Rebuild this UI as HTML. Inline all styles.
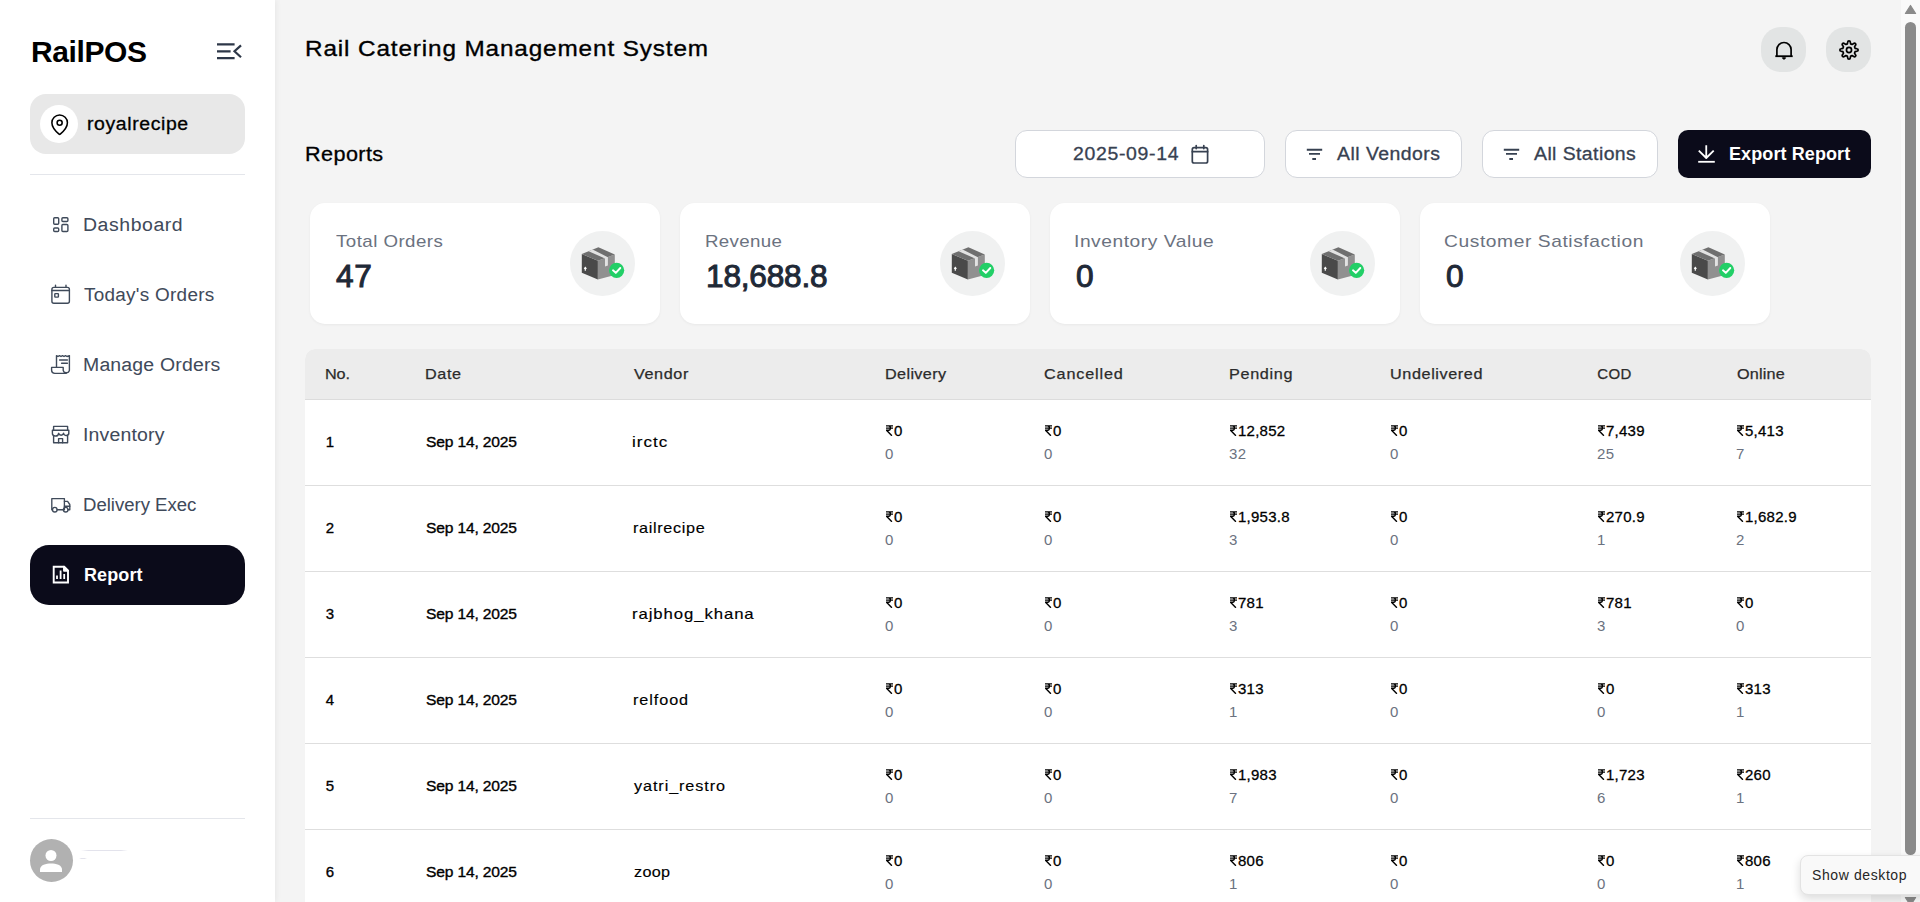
<!DOCTYPE html>
<html><head><meta charset="utf-8"><title>RailPOS Reports</title>
<style>
html,body{margin:0;padding:0;width:1920px;height:902px;overflow:hidden;background:#f4f4f4;font-family:"Liberation Sans", sans-serif;}
.t{position:absolute;white-space:nowrap;}
.box{position:absolute;}
.ic{position:absolute;overflow:visible;}
.rup{display:inline-block;vertical-align:baseline;margin-right:1px;position:relative;top:0px;}
#sb{position:absolute;left:0;top:0;width:275px;height:902px;background:#fff;box-shadow:1px 0 6px rgba(0,0,0,0.06);}
.card{background:#fff;border-radius:15px;box-shadow:0 1px 3px rgba(0,0,0,0.05);}
</style></head><body>
<div id="sb"></div>
<div class="t" style="left:31px;top:36.61px;font-size:30px;line-height:30px;color:#000;font-weight:700;letter-spacing:-0.4px;">RailPOS</div>
<svg class="ic" style="left:214px;top:40px" width="30" height="22" viewBox="0 0 30 22" fill="none" stroke="#2d3748" stroke-width="2.2" stroke-linecap="butt"><path d="M3 4.4H20.6M3 11.3H16.6M3 18.2H20.6"/><path d="M26.2 6.1L20.5 11.3L26.2 16.5" stroke-linecap="square"/></svg>
<div class="box" style="left:30px;top:94px;width:215px;height:60px;border-radius:16px;background:#e8e8e8"></div>
<div class="box" style="left:40px;top:105px;width:38px;height:38px;border-radius:50%;background:#fff"></div>
<svg class="ic" style="left:47.9px;top:112.6px" width="23.3" height="23.3" viewBox="0 0 24 24" fill="none" stroke="#000" stroke-width="1.6"><circle cx="12" cy="10" r="2.6"/><path d="M20 10c0 4.993-5.539 10.193-7.399 11.799a1 1 0 0 1-1.202 0C9.539 20.193 4 14.993 4 10a8 8 0 0 1 16 0" stroke-linejoin="round"/></svg>
<div class="t" style="left:87.4px;top:114.76px;font-size:18px;line-height:18px;color:#000;font-weight:400;letter-spacing:0.56px;-webkit-text-stroke:0.3px #000;transform:scaleX(1.08);transform-origin:0 0;">royalrecipe</div>
<div class="box" style="left:30px;top:174px;width:215px;height:1px;background:#e4e6eb"></div>
<div class="t" style="left:83.2px;top:215.76px;font-size:18px;line-height:18px;color:#3f4a5a;font-weight:400;letter-spacing:0.521px;-webkit-text-stroke:0.05px #3f4a5a;transform:scaleX(1.08);transform-origin:0 0;">Dashboard</div>
<div class="t" style="left:84.3px;top:285.76px;font-size:18px;line-height:18px;color:#3f4a5a;font-weight:400;letter-spacing:0.271px;-webkit-text-stroke:0.05px #3f4a5a;transform:scaleX(1.05);transform-origin:0 0;">Today's Orders</div>
<div class="t" style="left:83.2px;top:355.76px;font-size:18px;line-height:18px;color:#3f4a5a;font-weight:400;letter-spacing:0.17px;-webkit-text-stroke:0.05px #3f4a5a;transform:scaleX(1.08);transform-origin:0 0;">Manage Orders</div>
<div class="t" style="left:83.2px;top:425.76px;font-size:18px;line-height:18px;color:#3f4a5a;font-weight:400;letter-spacing:0.162px;-webkit-text-stroke:0.05px #3f4a5a;transform:scaleX(1.08);transform-origin:0 0;">Inventory</div>
<div class="t" style="left:83.2px;top:495.76px;font-size:18px;line-height:18px;color:#3f4a5a;font-weight:400;letter-spacing:-0.008px;-webkit-text-stroke:0.05px #3f4a5a;transform:scaleX(1.03);transform-origin:0 0;">Delivery Exec</div>
<svg class="ic" style="left:46px;top:210px" width="30" height="30" viewBox="0 0 30 30" fill="none" stroke="#3f4a5a" stroke-width="1.4" stroke-linecap="round" stroke-linejoin="round"><rect x="7.7" y="7.7" width="5" height="6.5" rx="1"/><rect x="15.9" y="7.7" width="6" height="3.8" rx="1"/><rect x="7.7" y="18" width="5" height="3.5" rx="1"/><rect x="15.9" y="14.5" width="6" height="7" rx="1"/></svg>
<svg class="ic" style="left:46px;top:280px" width="30" height="30" viewBox="0 0 30 30" fill="none" stroke="#3f4a5a" stroke-width="1.4" stroke-linecap="round" stroke-linejoin="round"><rect x="5.9" y="7.4" width="17.5" height="15.8" rx="2"/><path d="M5.9 10.5H23.4M9.5 5.3V7.4M20 5.3V7.4"/><rect x="8.8" y="13.6" width="3.6" height="3.5" rx="0.6"/></svg>
<svg class="ic" style="left:46px;top:350px" width="30" height="30" viewBox="0 0 30 30" fill="none" stroke="#3f4a5a" stroke-width="1.4" stroke-linecap="round" stroke-linejoin="round"><path d="M10.5 17.4V5.6L12 6.5L13.5 5.6L15 6.5L16.5 5.6L18 6.5L19.5 5.6L21 6.5L23.4 5.6V20.3A3.2 3.2 0 0 1 17.2 20.3V17.4H5.6V20.3A3.2 3.2 0 0 0 8.8 23.4H20.2"/><path d="M13.6 10H21.4M15.6 13.3H21.4"/></svg>
<svg class="ic" style="left:46px;top:420px" width="30" height="30" viewBox="0 0 30 30" fill="none" stroke="#3f4a5a" stroke-width="1.4" stroke-linecap="round" stroke-linejoin="round"><path d="M7.6 10.3V6.4H21.6V10.3"/><path d="M6.4 10.3H22.8V12.5A2.6 2.6 0 0 1 17.6 13.3A2.6 2.6 0 0 1 12.6 13.3A2.6 2.6 0 0 1 6.4 12.5Z"/><path d="M7.6 15.5V22.8H21.6V15.5"/><path d="M12.6 22.8V18.6H16.6V22.8"/></svg>
<svg class="ic" style="left:46px;top:490px" width="30" height="30" viewBox="0 0 30 30" fill="none" stroke="#3f4a5a" stroke-width="1.35" stroke-linecap="round" stroke-linejoin="round"><path d="M5.8 19.7V8.6H18.4V19.7"/><path d="M11.1 19.7H17.4"/><path d="M18.4 11.3H21.6L23.8 14.5V19.7H22"/><path d="M18.4 16.2H23.8"/><circle cx="8.8" cy="19.7" r="2.3"/><circle cx="19.7" cy="19.7" r="2.3"/></svg>
<div class="box" style="left:30px;top:545px;width:215px;height:60px;border-radius:19px;background:#0b0b1a"></div>
<svg class="ic" style="left:46px;top:560px" width="30" height="30" viewBox="0 0 30 30" fill="none" stroke="#fff" stroke-width="1.9" stroke-linecap="round" stroke-linejoin="round"><path d="M7.7 6.7H18L22 10.7V22.5H7.7Z" stroke-linejoin="miter" stroke-linecap="butt"/><path d="M11 15.4V19M14.6 10.4V19M18.2 13.9V19" stroke-width="1.8" stroke-linecap="butt"/><path d="M18 6.7V10.7H22Z" fill="#fff" stroke-linecap="butt"/></svg>
<div class="t" style="left:84px;top:565.76px;font-size:18px;line-height:18px;color:#fff;font-weight:700;letter-spacing:0.1px;">Report</div>
<div class="box" style="left:30px;top:818px;width:215px;height:1px;background:#e4e6eb"></div>
<svg class="ic" style="left:30px;top:839px" width="43" height="43" viewBox="0 0 43 43"><circle cx="21.5" cy="21.5" r="21.5" fill="#b1b1b1"/><circle cx="21" cy="16.5" r="5.5" fill="#fff"/><path d="M10 33V30.5C10 26 16 24.5 21 24.5S32 26 32 30.5V33Z" fill="#fff"/></svg>
<div class="box" style="left:81px;top:850px;width:47px;height:1px;background:linear-gradient(90deg,rgba(225,225,235,0),#e3e3ec 15%,#e3e3ec 85%,rgba(225,225,235,0))"></div>
<div class="box" style="left:79px;top:858px;width:8px;height:1px;background:linear-gradient(90deg,rgba(225,225,235,0),#e3e3ec 30%,#e3e3ec 70%,rgba(225,225,235,0))"></div>
<div class="t" style="left:305.0px;top:37.95px;font-size:22.5px;line-height:22.5px;color:#000;font-weight:400;letter-spacing:0.809px;-webkit-text-stroke:0.35px #000;transform:scaleX(1.08);transform-origin:0 0;">Rail Catering Management System</div>
<div class="box" style="left:1761px;top:27px;width:45px;height:45px;border-radius:20px;background:#e2e4e4"></div>
<div class="box" style="left:1826px;top:27px;width:45px;height:45px;border-radius:20px;background:#e2e4e4"></div>
<svg class="ic" style="left:1770px;top:37px" width="28" height="28" viewBox="0 0 28 28" fill="none" stroke="#000" stroke-width="1.7" stroke-linecap="round" stroke-linejoin="round"><path d="M6.9 19.2V12.6A7.1 7.1 0 0 1 21.1 12.6V19.2" stroke-linecap="butt"/><path d="M5.3 19.2H22.7" stroke-width="1.8" stroke-linecap="butt"/><path d="M12.5 21.1A1.6 1.6 0 0 0 15.5 21.1Z" fill="#000" stroke-width="1"/></svg>
<svg class="ic" style="left:1835px;top:36px" width="28" height="28" viewBox="0 0 28 28" fill="none" stroke="#000" stroke-width="1.7" stroke-linecap="round" stroke-linejoin="round"><path d="M12.30 7.93L12.75 6.10A1.25 1.25 0 0 1 15.25 6.10L15.70 7.93A6.30 6.30 0 0 1 17.09 8.51L18.70 7.53A1.25 1.25 0 0 1 20.47 9.30L19.49 10.91A6.30 6.30 0 0 1 20.07 12.30L21.90 12.75A1.25 1.25 0 0 1 21.90 15.25L20.07 15.70A6.30 6.30 0 0 1 19.49 17.09L20.47 18.70A1.25 1.25 0 0 1 18.70 20.47L17.09 19.49A6.30 6.30 0 0 1 15.70 20.07L15.25 21.90A1.25 1.25 0 0 1 12.75 21.90L12.30 20.07A6.30 6.30 0 0 1 10.91 19.49L9.30 20.47A1.25 1.25 0 0 1 7.53 18.70L8.51 17.09A6.30 6.30 0 0 1 7.93 15.70L6.10 15.25A1.25 1.25 0 0 1 6.10 12.75L7.93 12.30A6.30 6.30 0 0 1 8.51 10.91L7.53 9.30A1.25 1.25 0 0 1 9.30 7.53L10.91 8.51A6.30 6.30 0 0 1 12.30 7.93Z" stroke-linejoin="round"/><circle cx="14" cy="14" r="2.55"/></svg>
<div class="t" style="left:305.0px;top:144.07px;font-size:20px;line-height:20px;color:#000;font-weight:400;letter-spacing:0.386px;-webkit-text-stroke:0.3px #000;transform:scaleX(1.08);transform-origin:0 0;">Reports</div>
<div class="box" style="left:1015px;top:130px;width:250px;height:48px;border-radius:12px;background:#fff;border:1px solid #d3d6dc;box-sizing:border-box"></div>
<div class="t" style="left:1072.8px;top:144.76px;font-size:18px;line-height:18px;color:#374151;font-weight:400;letter-spacing:0.617px;-webkit-text-stroke:0.3px #374151;transform:scaleX(1.08);transform-origin:0 0;">2025-09-14</div>
<svg class="ic" style="left:1186px;top:142px" width="26" height="26" viewBox="0 0 26 26" fill="none" stroke="#374151" stroke-width="1.7" stroke-linecap="round" stroke-linejoin="round"><rect x="6.3" y="5.6" width="15.3" height="15.4" rx="1.8"/><path d="M6.3 9.7H21.6M10.2 3.6V6.6M17.8 3.6V6.6"/></svg>
<div class="box" style="left:1285px;top:130px;width:177px;height:48px;border-radius:12px;background:#fff;border:1px solid #d3d6dc;box-sizing:border-box"></div>
<div class="t" style="left:1336.7px;top:144.76px;font-size:18px;line-height:18px;color:#374151;font-weight:400;letter-spacing:0.435px;-webkit-text-stroke:0.3px #374151;transform:scaleX(1.08);transform-origin:0 0;">All Vendors</div>
<svg class="ic" style="left:1300px;top:140px" width="28" height="28" viewBox="0 0 28 28" fill="none" stroke="#374151" stroke-width="1.9" stroke-linecap="round" stroke-linejoin="round"><path d="M6.8 9.7H22.2M9 13.9H20M12.3 19H16" stroke-linecap="butt"/></svg>
<div class="box" style="left:1482px;top:130px;width:176px;height:48px;border-radius:12px;background:#fff;border:1px solid #d3d6dc;box-sizing:border-box"></div>
<div class="t" style="left:1533.75px;top:144.76px;font-size:18px;line-height:18px;color:#374151;font-weight:400;letter-spacing:0.383px;-webkit-text-stroke:0.3px #374151;transform:scaleX(1.08);transform-origin:0 0;">All Stations</div>
<svg class="ic" style="left:1497px;top:140px" width="28" height="28" viewBox="0 0 28 28" fill="none" stroke="#374151" stroke-width="1.9" stroke-linecap="round" stroke-linejoin="round"><path d="M6.8 9.7H22.2M9 13.9H20M12.3 19H16" stroke-linecap="butt"/></svg>
<div class="box" style="left:1678px;top:130px;width:193px;height:48px;border-radius:10px;background:#0b0b1a"></div>
<svg class="ic" style="left:1692px;top:140px" width="28" height="28" viewBox="0 0 28 28" fill="none" stroke="#fff" stroke-width="1.8" stroke-linecap="round" stroke-linejoin="round"><path d="M14.25 5.2V18.2M6.8 10.6L14.25 18L21.7 10.6" stroke-linecap="butt"/><path d="M6.2 21.8H22.8" stroke-linecap="butt"/></svg>
<div class="t" style="left:1729px;top:144.76px;font-size:18px;line-height:18px;color:#fff;font-weight:700;letter-spacing:0.1px;">Export Report</div>
<div class="box card" style="left:310px;top:203px;width:350px;height:121px"></div>
<div class="t" style="left:336.0px;top:232.61px;font-size:17px;line-height:17px;color:#6b7280;font-weight:400;letter-spacing:0.413px;transform:scaleX(1.1);transform-origin:0 0;">Total Orders</div>
<div class="t" style="left:335.5px;top:260.76px;font-size:31px;line-height:31px;color:#1f2937;font-weight:400;letter-spacing:0.6px;-webkit-text-stroke:1.0px #1f2937;transform:scaleX(1.02);transform-origin:0 0;">47</div>
<div class="box" style="left:570px;top:231px;width:65px;height:65px;border-radius:50%;background:#f0f1f1"></div>
<svg class="ic" style="left:578px;top:243px" width="40" height="40" viewBox="0 0 40 40"><polygon points="3.8,11.1 19.9,17.7 19.9,36.6 3.8,29.7" fill="#4a4a4a"/><polygon points="19.9,17.7 36.8,11.5 36.8,31.9 19.9,36.6" fill="#909090"/><polygon points="3.8,11.1 20.4,4.2 36.8,11.5 19.9,17.7" fill="#6f6f6f"/><polygon points="10.6,8.2 14.6,6.6 29.9,14.2 29.9,22.6 27,23.6 27,15.5" fill="#e2e2e2"/><path d="M7.3 27.8V24.8M6.2 25.9L7.3 24.4L8.4 25.9" stroke="#fff" stroke-width="1.2" fill="none"/><circle cx="38.6" cy="27.3" r="7.6" fill="#22cf67"/><path d="M35 27.3L37.8 29.9L42.3 25" stroke="#fff" stroke-width="1.9" fill="none" stroke-linecap="round" stroke-linejoin="round"/></svg>
<div class="box card" style="left:680px;top:203px;width:350px;height:121px"></div>
<div class="t" style="left:704.8px;top:232.61px;font-size:17px;line-height:17px;color:#6b7280;font-weight:400;letter-spacing:0.303px;transform:scaleX(1.1);transform-origin:0 0;">Revenue</div>
<div class="t" style="left:705.5px;top:260.76px;font-size:31px;line-height:31px;color:#1f2937;font-weight:400;letter-spacing:-0.2px;-webkit-text-stroke:1.0px #1f2937;transform:scaleX(1.02);transform-origin:0 0;">18,688.8</div>
<div class="box" style="left:940px;top:231px;width:65px;height:65px;border-radius:50%;background:#f0f1f1"></div>
<svg class="ic" style="left:948px;top:243px" width="40" height="40" viewBox="0 0 40 40"><polygon points="3.8,11.1 19.9,17.7 19.9,36.6 3.8,29.7" fill="#4a4a4a"/><polygon points="19.9,17.7 36.8,11.5 36.8,31.9 19.9,36.6" fill="#909090"/><polygon points="3.8,11.1 20.4,4.2 36.8,11.5 19.9,17.7" fill="#6f6f6f"/><polygon points="10.6,8.2 14.6,6.6 29.9,14.2 29.9,22.6 27,23.6 27,15.5" fill="#e2e2e2"/><path d="M7.3 27.8V24.8M6.2 25.9L7.3 24.4L8.4 25.9" stroke="#fff" stroke-width="1.2" fill="none"/><circle cx="38.6" cy="27.3" r="7.6" fill="#22cf67"/><path d="M35 27.3L37.8 29.9L42.3 25" stroke="#fff" stroke-width="1.9" fill="none" stroke-linecap="round" stroke-linejoin="round"/></svg>
<div class="box card" style="left:1050px;top:203px;width:350px;height:121px"></div>
<div class="t" style="left:1073.8px;top:232.61px;font-size:17px;line-height:17px;color:#6b7280;font-weight:400;letter-spacing:0.48px;transform:scaleX(1.13);transform-origin:0 0;">Inventory Value</div>
<div class="t" style="left:1075.5px;top:260.76px;font-size:31px;line-height:31px;color:#1f2937;font-weight:400;letter-spacing:-0.2px;-webkit-text-stroke:1.0px #1f2937;transform:scaleX(1.02);transform-origin:0 0;">0</div>
<div class="box" style="left:1310px;top:231px;width:65px;height:65px;border-radius:50%;background:#f0f1f1"></div>
<svg class="ic" style="left:1318px;top:243px" width="40" height="40" viewBox="0 0 40 40"><polygon points="3.8,11.1 19.9,17.7 19.9,36.6 3.8,29.7" fill="#4a4a4a"/><polygon points="19.9,17.7 36.8,11.5 36.8,31.9 19.9,36.6" fill="#909090"/><polygon points="3.8,11.1 20.4,4.2 36.8,11.5 19.9,17.7" fill="#6f6f6f"/><polygon points="10.6,8.2 14.6,6.6 29.9,14.2 29.9,22.6 27,23.6 27,15.5" fill="#e2e2e2"/><path d="M7.3 27.8V24.8M6.2 25.9L7.3 24.4L8.4 25.9" stroke="#fff" stroke-width="1.2" fill="none"/><circle cx="38.6" cy="27.3" r="7.6" fill="#22cf67"/><path d="M35 27.3L37.8 29.9L42.3 25" stroke="#fff" stroke-width="1.9" fill="none" stroke-linecap="round" stroke-linejoin="round"/></svg>
<div class="box card" style="left:1420px;top:203px;width:350px;height:121px"></div>
<div class="t" style="left:1444.0px;top:232.61px;font-size:17px;line-height:17px;color:#6b7280;font-weight:400;letter-spacing:0.509px;transform:scaleX(1.13);transform-origin:0 0;">Customer Satisfaction</div>
<div class="t" style="left:1445.5px;top:260.76px;font-size:31px;line-height:31px;color:#1f2937;font-weight:400;letter-spacing:-0.2px;-webkit-text-stroke:1.0px #1f2937;transform:scaleX(1.02);transform-origin:0 0;">0</div>
<div class="box" style="left:1680px;top:231px;width:65px;height:65px;border-radius:50%;background:#f0f1f1"></div>
<svg class="ic" style="left:1688px;top:243px" width="40" height="40" viewBox="0 0 40 40"><polygon points="3.8,11.1 19.9,17.7 19.9,36.6 3.8,29.7" fill="#4a4a4a"/><polygon points="19.9,17.7 36.8,11.5 36.8,31.9 19.9,36.6" fill="#909090"/><polygon points="3.8,11.1 20.4,4.2 36.8,11.5 19.9,17.7" fill="#6f6f6f"/><polygon points="10.6,8.2 14.6,6.6 29.9,14.2 29.9,22.6 27,23.6 27,15.5" fill="#e2e2e2"/><path d="M7.3 27.8V24.8M6.2 25.9L7.3 24.4L8.4 25.9" stroke="#fff" stroke-width="1.2" fill="none"/><circle cx="38.6" cy="27.3" r="7.6" fill="#22cf67"/><path d="M35 27.3L37.8 29.9L42.3 25" stroke="#fff" stroke-width="1.9" fill="none" stroke-linecap="round" stroke-linejoin="round"/></svg>
<div class="box" style="left:305px;top:349px;width:1566px;height:600px;border-radius:10px 10px 0 0;background:#fff;overflow:hidden"><div style="position:absolute;left:0;top:0;right:0;height:50px;background:#ececec;border-bottom:1px solid #dcdcdc"></div></div>
<div class="t" style="left:324.5px;top:366.30px;font-size:15px;line-height:15px;color:#2b2b2b;font-weight:400;letter-spacing:-0.093px;-webkit-text-stroke:0.25px #2b2b2b;transform:scaleX(1.08);transform-origin:0 0;">No.</div>
<div class="t" style="left:425.2px;top:366.30px;font-size:15px;line-height:15px;color:#2b2b2b;font-weight:400;letter-spacing:0.556px;-webkit-text-stroke:0.25px #2b2b2b;transform:scaleX(1.08);transform-origin:0 0;">Date</div>
<div class="t" style="left:633.75px;top:366.30px;font-size:15px;line-height:15px;color:#2b2b2b;font-weight:400;letter-spacing:0.556px;-webkit-text-stroke:0.25px #2b2b2b;transform:scaleX(1.08);transform-origin:0 0;">Vendor</div>
<div class="t" style="left:884.75px;top:366.30px;font-size:15px;line-height:15px;color:#2b2b2b;font-weight:400;letter-spacing:0.331px;-webkit-text-stroke:0.25px #2b2b2b;transform:scaleX(1.08);transform-origin:0 0;">Delivery</div>
<div class="t" style="left:1044.25px;top:366.30px;font-size:15px;line-height:15px;color:#2b2b2b;font-weight:400;letter-spacing:0.781px;-webkit-text-stroke:0.25px #2b2b2b;transform:scaleX(1.08);transform-origin:0 0;">Cancelled</div>
<div class="t" style="left:1228.6px;top:366.30px;font-size:15px;line-height:15px;color:#2b2b2b;font-weight:400;letter-spacing:0.617px;-webkit-text-stroke:0.25px #2b2b2b;transform:scaleX(1.08);transform-origin:0 0;">Pending</div>
<div class="t" style="left:1389.8px;top:366.30px;font-size:15px;line-height:15px;color:#2b2b2b;font-weight:400;letter-spacing:0.556px;-webkit-text-stroke:0.25px #2b2b2b;transform:scaleX(1.08);transform-origin:0 0;">Undelivered</div>
<div class="t" style="left:1597.2px;top:366.30px;font-size:15px;line-height:15px;color:#2b2b2b;font-weight:400;letter-spacing:0.4px;-webkit-text-stroke:0.25px #2b2b2b;">COD</div>
<div class="t" style="left:1736.7px;top:366.30px;font-size:15px;line-height:15px;color:#2b2b2b;font-weight:400;letter-spacing:0.185px;-webkit-text-stroke:0.25px #2b2b2b;transform:scaleX(1.08);transform-origin:0 0;">Online</div>
<div class="t" style="left:325.8px;top:434.30px;font-size:15px;line-height:15px;color:#000;font-weight:400;letter-spacing:0px;-webkit-text-stroke:0.32px #000;">1</div>
<div class="t" style="left:426.1px;top:434.30px;font-size:15px;line-height:15px;color:#000;font-weight:400;letter-spacing:-0.157px;-webkit-text-stroke:0.35px #000;transform:scaleX(1.04);transform-origin:0 0;">Sep 14, 2025</div>
<div class="t" style="left:632.0px;top:434.30px;font-size:15px;line-height:15px;color:#000;font-weight:400;letter-spacing:0.877px;-webkit-text-stroke:0.15px #000;transform:scaleX(1.14);transform-origin:0 0;">irctc</div>
<div class="t" style="left:886px;top:423.30px;font-size:15px;line-height:15px;color:#000;font-weight:400;letter-spacing:0.25px;-webkit-text-stroke:0.28px #000;"><svg class="rup" viewBox="0 0 7 11" width="7" height="11"><path d="M0 0.8H7M0 3.1H7M0.4 0.8H2.6C5 0.8 5 5.2 2.6 5.2H0.5L5.9 10.8" fill="none" stroke="currentColor" stroke-width="1.35"/></svg>0</div>
<div class="t" style="left:885px;top:446.30px;font-size:15px;line-height:15px;color:#6b7280;font-weight:400;letter-spacing:0.3px;">0</div>
<div class="t" style="left:1045px;top:423.30px;font-size:15px;line-height:15px;color:#000;font-weight:400;letter-spacing:0.25px;-webkit-text-stroke:0.28px #000;"><svg class="rup" viewBox="0 0 7 11" width="7" height="11"><path d="M0 0.8H7M0 3.1H7M0.4 0.8H2.6C5 0.8 5 5.2 2.6 5.2H0.5L5.9 10.8" fill="none" stroke="currentColor" stroke-width="1.35"/></svg>0</div>
<div class="t" style="left:1044px;top:446.30px;font-size:15px;line-height:15px;color:#6b7280;font-weight:400;letter-spacing:0.3px;">0</div>
<div class="t" style="left:1230px;top:423.30px;font-size:15px;line-height:15px;color:#000;font-weight:400;letter-spacing:0.25px;-webkit-text-stroke:0.28px #000;"><svg class="rup" viewBox="0 0 7 11" width="7" height="11"><path d="M0 0.8H7M0 3.1H7M0.4 0.8H2.6C5 0.8 5 5.2 2.6 5.2H0.5L5.9 10.8" fill="none" stroke="currentColor" stroke-width="1.35"/></svg>12,852</div>
<div class="t" style="left:1229px;top:446.30px;font-size:15px;line-height:15px;color:#6b7280;font-weight:400;letter-spacing:0.3px;">32</div>
<div class="t" style="left:1391px;top:423.30px;font-size:15px;line-height:15px;color:#000;font-weight:400;letter-spacing:0.25px;-webkit-text-stroke:0.28px #000;"><svg class="rup" viewBox="0 0 7 11" width="7" height="11"><path d="M0 0.8H7M0 3.1H7M0.4 0.8H2.6C5 0.8 5 5.2 2.6 5.2H0.5L5.9 10.8" fill="none" stroke="currentColor" stroke-width="1.35"/></svg>0</div>
<div class="t" style="left:1390px;top:446.30px;font-size:15px;line-height:15px;color:#6b7280;font-weight:400;letter-spacing:0.3px;">0</div>
<div class="t" style="left:1598px;top:423.30px;font-size:15px;line-height:15px;color:#000;font-weight:400;letter-spacing:0.25px;-webkit-text-stroke:0.28px #000;"><svg class="rup" viewBox="0 0 7 11" width="7" height="11"><path d="M0 0.8H7M0 3.1H7M0.4 0.8H2.6C5 0.8 5 5.2 2.6 5.2H0.5L5.9 10.8" fill="none" stroke="currentColor" stroke-width="1.35"/></svg>7,439</div>
<div class="t" style="left:1597px;top:446.30px;font-size:15px;line-height:15px;color:#6b7280;font-weight:400;letter-spacing:0.3px;">25</div>
<div class="t" style="left:1737px;top:423.30px;font-size:15px;line-height:15px;color:#000;font-weight:400;letter-spacing:0.25px;-webkit-text-stroke:0.28px #000;"><svg class="rup" viewBox="0 0 7 11" width="7" height="11"><path d="M0 0.8H7M0 3.1H7M0.4 0.8H2.6C5 0.8 5 5.2 2.6 5.2H0.5L5.9 10.8" fill="none" stroke="currentColor" stroke-width="1.35"/></svg>5,413</div>
<div class="t" style="left:1736px;top:446.30px;font-size:15px;line-height:15px;color:#6b7280;font-weight:400;letter-spacing:0.3px;">7</div>
<div class="box" style="left:305px;top:485px;width:1566px;height:1px;background:#dedede"></div>
<div class="t" style="left:325.8px;top:520.30px;font-size:15px;line-height:15px;color:#000;font-weight:400;letter-spacing:0px;-webkit-text-stroke:0.32px #000;">2</div>
<div class="t" style="left:426.1px;top:520.30px;font-size:15px;line-height:15px;color:#000;font-weight:400;letter-spacing:-0.157px;-webkit-text-stroke:0.35px #000;transform:scaleX(1.04);transform-origin:0 0;">Sep 14, 2025</div>
<div class="t" style="left:633.0px;top:520.30px;font-size:15px;line-height:15px;color:#000;font-weight:400;letter-spacing:0.617px;-webkit-text-stroke:0.15px #000;transform:scaleX(1.08);transform-origin:0 0;">railrecipe</div>
<div class="t" style="left:886px;top:509.30px;font-size:15px;line-height:15px;color:#000;font-weight:400;letter-spacing:0.25px;-webkit-text-stroke:0.28px #000;"><svg class="rup" viewBox="0 0 7 11" width="7" height="11"><path d="M0 0.8H7M0 3.1H7M0.4 0.8H2.6C5 0.8 5 5.2 2.6 5.2H0.5L5.9 10.8" fill="none" stroke="currentColor" stroke-width="1.35"/></svg>0</div>
<div class="t" style="left:885px;top:532.30px;font-size:15px;line-height:15px;color:#6b7280;font-weight:400;letter-spacing:0.3px;">0</div>
<div class="t" style="left:1045px;top:509.30px;font-size:15px;line-height:15px;color:#000;font-weight:400;letter-spacing:0.25px;-webkit-text-stroke:0.28px #000;"><svg class="rup" viewBox="0 0 7 11" width="7" height="11"><path d="M0 0.8H7M0 3.1H7M0.4 0.8H2.6C5 0.8 5 5.2 2.6 5.2H0.5L5.9 10.8" fill="none" stroke="currentColor" stroke-width="1.35"/></svg>0</div>
<div class="t" style="left:1044px;top:532.30px;font-size:15px;line-height:15px;color:#6b7280;font-weight:400;letter-spacing:0.3px;">0</div>
<div class="t" style="left:1230px;top:509.30px;font-size:15px;line-height:15px;color:#000;font-weight:400;letter-spacing:0.25px;-webkit-text-stroke:0.28px #000;"><svg class="rup" viewBox="0 0 7 11" width="7" height="11"><path d="M0 0.8H7M0 3.1H7M0.4 0.8H2.6C5 0.8 5 5.2 2.6 5.2H0.5L5.9 10.8" fill="none" stroke="currentColor" stroke-width="1.35"/></svg>1,953.8</div>
<div class="t" style="left:1229px;top:532.30px;font-size:15px;line-height:15px;color:#6b7280;font-weight:400;letter-spacing:0.3px;">3</div>
<div class="t" style="left:1391px;top:509.30px;font-size:15px;line-height:15px;color:#000;font-weight:400;letter-spacing:0.25px;-webkit-text-stroke:0.28px #000;"><svg class="rup" viewBox="0 0 7 11" width="7" height="11"><path d="M0 0.8H7M0 3.1H7M0.4 0.8H2.6C5 0.8 5 5.2 2.6 5.2H0.5L5.9 10.8" fill="none" stroke="currentColor" stroke-width="1.35"/></svg>0</div>
<div class="t" style="left:1390px;top:532.30px;font-size:15px;line-height:15px;color:#6b7280;font-weight:400;letter-spacing:0.3px;">0</div>
<div class="t" style="left:1598px;top:509.30px;font-size:15px;line-height:15px;color:#000;font-weight:400;letter-spacing:0.25px;-webkit-text-stroke:0.28px #000;"><svg class="rup" viewBox="0 0 7 11" width="7" height="11"><path d="M0 0.8H7M0 3.1H7M0.4 0.8H2.6C5 0.8 5 5.2 2.6 5.2H0.5L5.9 10.8" fill="none" stroke="currentColor" stroke-width="1.35"/></svg>270.9</div>
<div class="t" style="left:1597px;top:532.30px;font-size:15px;line-height:15px;color:#6b7280;font-weight:400;letter-spacing:0.3px;">1</div>
<div class="t" style="left:1737px;top:509.30px;font-size:15px;line-height:15px;color:#000;font-weight:400;letter-spacing:0.25px;-webkit-text-stroke:0.28px #000;"><svg class="rup" viewBox="0 0 7 11" width="7" height="11"><path d="M0 0.8H7M0 3.1H7M0.4 0.8H2.6C5 0.8 5 5.2 2.6 5.2H0.5L5.9 10.8" fill="none" stroke="currentColor" stroke-width="1.35"/></svg>1,682.9</div>
<div class="t" style="left:1736px;top:532.30px;font-size:15px;line-height:15px;color:#6b7280;font-weight:400;letter-spacing:0.3px;">2</div>
<div class="box" style="left:305px;top:571px;width:1566px;height:1px;background:#dedede"></div>
<div class="t" style="left:325.8px;top:606.30px;font-size:15px;line-height:15px;color:#000;font-weight:400;letter-spacing:0px;-webkit-text-stroke:0.32px #000;">3</div>
<div class="t" style="left:426.1px;top:606.30px;font-size:15px;line-height:15px;color:#000;font-weight:400;letter-spacing:-0.157px;-webkit-text-stroke:0.35px #000;transform:scaleX(1.04);transform-origin:0 0;">Sep 14, 2025</div>
<div class="t" style="left:632.0px;top:606.30px;font-size:15px;line-height:15px;color:#000;font-weight:400;letter-spacing:0.822px;-webkit-text-stroke:0.15px #000;transform:scaleX(1.115);transform-origin:0 0;">rajbhog_khana</div>
<div class="t" style="left:886px;top:595.30px;font-size:15px;line-height:15px;color:#000;font-weight:400;letter-spacing:0.25px;-webkit-text-stroke:0.28px #000;"><svg class="rup" viewBox="0 0 7 11" width="7" height="11"><path d="M0 0.8H7M0 3.1H7M0.4 0.8H2.6C5 0.8 5 5.2 2.6 5.2H0.5L5.9 10.8" fill="none" stroke="currentColor" stroke-width="1.35"/></svg>0</div>
<div class="t" style="left:885px;top:618.30px;font-size:15px;line-height:15px;color:#6b7280;font-weight:400;letter-spacing:0.3px;">0</div>
<div class="t" style="left:1045px;top:595.30px;font-size:15px;line-height:15px;color:#000;font-weight:400;letter-spacing:0.25px;-webkit-text-stroke:0.28px #000;"><svg class="rup" viewBox="0 0 7 11" width="7" height="11"><path d="M0 0.8H7M0 3.1H7M0.4 0.8H2.6C5 0.8 5 5.2 2.6 5.2H0.5L5.9 10.8" fill="none" stroke="currentColor" stroke-width="1.35"/></svg>0</div>
<div class="t" style="left:1044px;top:618.30px;font-size:15px;line-height:15px;color:#6b7280;font-weight:400;letter-spacing:0.3px;">0</div>
<div class="t" style="left:1230px;top:595.30px;font-size:15px;line-height:15px;color:#000;font-weight:400;letter-spacing:0.25px;-webkit-text-stroke:0.28px #000;"><svg class="rup" viewBox="0 0 7 11" width="7" height="11"><path d="M0 0.8H7M0 3.1H7M0.4 0.8H2.6C5 0.8 5 5.2 2.6 5.2H0.5L5.9 10.8" fill="none" stroke="currentColor" stroke-width="1.35"/></svg>781</div>
<div class="t" style="left:1229px;top:618.30px;font-size:15px;line-height:15px;color:#6b7280;font-weight:400;letter-spacing:0.3px;">3</div>
<div class="t" style="left:1391px;top:595.30px;font-size:15px;line-height:15px;color:#000;font-weight:400;letter-spacing:0.25px;-webkit-text-stroke:0.28px #000;"><svg class="rup" viewBox="0 0 7 11" width="7" height="11"><path d="M0 0.8H7M0 3.1H7M0.4 0.8H2.6C5 0.8 5 5.2 2.6 5.2H0.5L5.9 10.8" fill="none" stroke="currentColor" stroke-width="1.35"/></svg>0</div>
<div class="t" style="left:1390px;top:618.30px;font-size:15px;line-height:15px;color:#6b7280;font-weight:400;letter-spacing:0.3px;">0</div>
<div class="t" style="left:1598px;top:595.30px;font-size:15px;line-height:15px;color:#000;font-weight:400;letter-spacing:0.25px;-webkit-text-stroke:0.28px #000;"><svg class="rup" viewBox="0 0 7 11" width="7" height="11"><path d="M0 0.8H7M0 3.1H7M0.4 0.8H2.6C5 0.8 5 5.2 2.6 5.2H0.5L5.9 10.8" fill="none" stroke="currentColor" stroke-width="1.35"/></svg>781</div>
<div class="t" style="left:1597px;top:618.30px;font-size:15px;line-height:15px;color:#6b7280;font-weight:400;letter-spacing:0.3px;">3</div>
<div class="t" style="left:1737px;top:595.30px;font-size:15px;line-height:15px;color:#000;font-weight:400;letter-spacing:0.25px;-webkit-text-stroke:0.28px #000;"><svg class="rup" viewBox="0 0 7 11" width="7" height="11"><path d="M0 0.8H7M0 3.1H7M0.4 0.8H2.6C5 0.8 5 5.2 2.6 5.2H0.5L5.9 10.8" fill="none" stroke="currentColor" stroke-width="1.35"/></svg>0</div>
<div class="t" style="left:1736px;top:618.30px;font-size:15px;line-height:15px;color:#6b7280;font-weight:400;letter-spacing:0.3px;">0</div>
<div class="box" style="left:305px;top:657px;width:1566px;height:1px;background:#dedede"></div>
<div class="t" style="left:325.8px;top:692.30px;font-size:15px;line-height:15px;color:#000;font-weight:400;letter-spacing:0px;-webkit-text-stroke:0.32px #000;">4</div>
<div class="t" style="left:426.1px;top:692.30px;font-size:15px;line-height:15px;color:#000;font-weight:400;letter-spacing:-0.157px;-webkit-text-stroke:0.35px #000;transform:scaleX(1.04);transform-origin:0 0;">Sep 14, 2025</div>
<div class="t" style="left:633.0px;top:692.30px;font-size:15px;line-height:15px;color:#000;font-weight:400;letter-spacing:0.864px;-webkit-text-stroke:0.15px #000;transform:scaleX(1.08);transform-origin:0 0;">relfood</div>
<div class="t" style="left:886px;top:681.30px;font-size:15px;line-height:15px;color:#000;font-weight:400;letter-spacing:0.25px;-webkit-text-stroke:0.28px #000;"><svg class="rup" viewBox="0 0 7 11" width="7" height="11"><path d="M0 0.8H7M0 3.1H7M0.4 0.8H2.6C5 0.8 5 5.2 2.6 5.2H0.5L5.9 10.8" fill="none" stroke="currentColor" stroke-width="1.35"/></svg>0</div>
<div class="t" style="left:885px;top:704.30px;font-size:15px;line-height:15px;color:#6b7280;font-weight:400;letter-spacing:0.3px;">0</div>
<div class="t" style="left:1045px;top:681.30px;font-size:15px;line-height:15px;color:#000;font-weight:400;letter-spacing:0.25px;-webkit-text-stroke:0.28px #000;"><svg class="rup" viewBox="0 0 7 11" width="7" height="11"><path d="M0 0.8H7M0 3.1H7M0.4 0.8H2.6C5 0.8 5 5.2 2.6 5.2H0.5L5.9 10.8" fill="none" stroke="currentColor" stroke-width="1.35"/></svg>0</div>
<div class="t" style="left:1044px;top:704.30px;font-size:15px;line-height:15px;color:#6b7280;font-weight:400;letter-spacing:0.3px;">0</div>
<div class="t" style="left:1230px;top:681.30px;font-size:15px;line-height:15px;color:#000;font-weight:400;letter-spacing:0.25px;-webkit-text-stroke:0.28px #000;"><svg class="rup" viewBox="0 0 7 11" width="7" height="11"><path d="M0 0.8H7M0 3.1H7M0.4 0.8H2.6C5 0.8 5 5.2 2.6 5.2H0.5L5.9 10.8" fill="none" stroke="currentColor" stroke-width="1.35"/></svg>313</div>
<div class="t" style="left:1229px;top:704.30px;font-size:15px;line-height:15px;color:#6b7280;font-weight:400;letter-spacing:0.3px;">1</div>
<div class="t" style="left:1391px;top:681.30px;font-size:15px;line-height:15px;color:#000;font-weight:400;letter-spacing:0.25px;-webkit-text-stroke:0.28px #000;"><svg class="rup" viewBox="0 0 7 11" width="7" height="11"><path d="M0 0.8H7M0 3.1H7M0.4 0.8H2.6C5 0.8 5 5.2 2.6 5.2H0.5L5.9 10.8" fill="none" stroke="currentColor" stroke-width="1.35"/></svg>0</div>
<div class="t" style="left:1390px;top:704.30px;font-size:15px;line-height:15px;color:#6b7280;font-weight:400;letter-spacing:0.3px;">0</div>
<div class="t" style="left:1598px;top:681.30px;font-size:15px;line-height:15px;color:#000;font-weight:400;letter-spacing:0.25px;-webkit-text-stroke:0.28px #000;"><svg class="rup" viewBox="0 0 7 11" width="7" height="11"><path d="M0 0.8H7M0 3.1H7M0.4 0.8H2.6C5 0.8 5 5.2 2.6 5.2H0.5L5.9 10.8" fill="none" stroke="currentColor" stroke-width="1.35"/></svg>0</div>
<div class="t" style="left:1597px;top:704.30px;font-size:15px;line-height:15px;color:#6b7280;font-weight:400;letter-spacing:0.3px;">0</div>
<div class="t" style="left:1737px;top:681.30px;font-size:15px;line-height:15px;color:#000;font-weight:400;letter-spacing:0.25px;-webkit-text-stroke:0.28px #000;"><svg class="rup" viewBox="0 0 7 11" width="7" height="11"><path d="M0 0.8H7M0 3.1H7M0.4 0.8H2.6C5 0.8 5 5.2 2.6 5.2H0.5L5.9 10.8" fill="none" stroke="currentColor" stroke-width="1.35"/></svg>313</div>
<div class="t" style="left:1736px;top:704.30px;font-size:15px;line-height:15px;color:#6b7280;font-weight:400;letter-spacing:0.3px;">1</div>
<div class="box" style="left:305px;top:743px;width:1566px;height:1px;background:#dedede"></div>
<div class="t" style="left:325.8px;top:778.30px;font-size:15px;line-height:15px;color:#000;font-weight:400;letter-spacing:0px;-webkit-text-stroke:0.32px #000;">5</div>
<div class="t" style="left:426.1px;top:778.30px;font-size:15px;line-height:15px;color:#000;font-weight:400;letter-spacing:-0.157px;-webkit-text-stroke:0.35px #000;transform:scaleX(1.04);transform-origin:0 0;">Sep 14, 2025</div>
<div class="t" style="left:633.75px;top:778.30px;font-size:15px;line-height:15px;color:#000;font-weight:400;letter-spacing:0.838px;-webkit-text-stroke:0.15px #000;transform:scaleX(1.08);transform-origin:0 0;">yatri_restro</div>
<div class="t" style="left:886px;top:767.30px;font-size:15px;line-height:15px;color:#000;font-weight:400;letter-spacing:0.25px;-webkit-text-stroke:0.28px #000;"><svg class="rup" viewBox="0 0 7 11" width="7" height="11"><path d="M0 0.8H7M0 3.1H7M0.4 0.8H2.6C5 0.8 5 5.2 2.6 5.2H0.5L5.9 10.8" fill="none" stroke="currentColor" stroke-width="1.35"/></svg>0</div>
<div class="t" style="left:885px;top:790.30px;font-size:15px;line-height:15px;color:#6b7280;font-weight:400;letter-spacing:0.3px;">0</div>
<div class="t" style="left:1045px;top:767.30px;font-size:15px;line-height:15px;color:#000;font-weight:400;letter-spacing:0.25px;-webkit-text-stroke:0.28px #000;"><svg class="rup" viewBox="0 0 7 11" width="7" height="11"><path d="M0 0.8H7M0 3.1H7M0.4 0.8H2.6C5 0.8 5 5.2 2.6 5.2H0.5L5.9 10.8" fill="none" stroke="currentColor" stroke-width="1.35"/></svg>0</div>
<div class="t" style="left:1044px;top:790.30px;font-size:15px;line-height:15px;color:#6b7280;font-weight:400;letter-spacing:0.3px;">0</div>
<div class="t" style="left:1230px;top:767.30px;font-size:15px;line-height:15px;color:#000;font-weight:400;letter-spacing:0.25px;-webkit-text-stroke:0.28px #000;"><svg class="rup" viewBox="0 0 7 11" width="7" height="11"><path d="M0 0.8H7M0 3.1H7M0.4 0.8H2.6C5 0.8 5 5.2 2.6 5.2H0.5L5.9 10.8" fill="none" stroke="currentColor" stroke-width="1.35"/></svg>1,983</div>
<div class="t" style="left:1229px;top:790.30px;font-size:15px;line-height:15px;color:#6b7280;font-weight:400;letter-spacing:0.3px;">7</div>
<div class="t" style="left:1391px;top:767.30px;font-size:15px;line-height:15px;color:#000;font-weight:400;letter-spacing:0.25px;-webkit-text-stroke:0.28px #000;"><svg class="rup" viewBox="0 0 7 11" width="7" height="11"><path d="M0 0.8H7M0 3.1H7M0.4 0.8H2.6C5 0.8 5 5.2 2.6 5.2H0.5L5.9 10.8" fill="none" stroke="currentColor" stroke-width="1.35"/></svg>0</div>
<div class="t" style="left:1390px;top:790.30px;font-size:15px;line-height:15px;color:#6b7280;font-weight:400;letter-spacing:0.3px;">0</div>
<div class="t" style="left:1598px;top:767.30px;font-size:15px;line-height:15px;color:#000;font-weight:400;letter-spacing:0.25px;-webkit-text-stroke:0.28px #000;"><svg class="rup" viewBox="0 0 7 11" width="7" height="11"><path d="M0 0.8H7M0 3.1H7M0.4 0.8H2.6C5 0.8 5 5.2 2.6 5.2H0.5L5.9 10.8" fill="none" stroke="currentColor" stroke-width="1.35"/></svg>1,723</div>
<div class="t" style="left:1597px;top:790.30px;font-size:15px;line-height:15px;color:#6b7280;font-weight:400;letter-spacing:0.3px;">6</div>
<div class="t" style="left:1737px;top:767.30px;font-size:15px;line-height:15px;color:#000;font-weight:400;letter-spacing:0.25px;-webkit-text-stroke:0.28px #000;"><svg class="rup" viewBox="0 0 7 11" width="7" height="11"><path d="M0 0.8H7M0 3.1H7M0.4 0.8H2.6C5 0.8 5 5.2 2.6 5.2H0.5L5.9 10.8" fill="none" stroke="currentColor" stroke-width="1.35"/></svg>260</div>
<div class="t" style="left:1736px;top:790.30px;font-size:15px;line-height:15px;color:#6b7280;font-weight:400;letter-spacing:0.3px;">1</div>
<div class="box" style="left:305px;top:829px;width:1566px;height:1px;background:#dedede"></div>
<div class="t" style="left:325.8px;top:864.30px;font-size:15px;line-height:15px;color:#000;font-weight:400;letter-spacing:0px;-webkit-text-stroke:0.32px #000;">6</div>
<div class="t" style="left:426.1px;top:864.30px;font-size:15px;line-height:15px;color:#000;font-weight:400;letter-spacing:-0.157px;-webkit-text-stroke:0.35px #000;transform:scaleX(1.04);transform-origin:0 0;">Sep 14, 2025</div>
<div class="t" style="left:633.75px;top:864.30px;font-size:15px;line-height:15px;color:#000;font-weight:400;letter-spacing:0.262px;-webkit-text-stroke:0.15px #000;transform:scaleX(1.08);transform-origin:0 0;">zoop</div>
<div class="t" style="left:886px;top:853.30px;font-size:15px;line-height:15px;color:#000;font-weight:400;letter-spacing:0.25px;-webkit-text-stroke:0.28px #000;"><svg class="rup" viewBox="0 0 7 11" width="7" height="11"><path d="M0 0.8H7M0 3.1H7M0.4 0.8H2.6C5 0.8 5 5.2 2.6 5.2H0.5L5.9 10.8" fill="none" stroke="currentColor" stroke-width="1.35"/></svg>0</div>
<div class="t" style="left:885px;top:876.30px;font-size:15px;line-height:15px;color:#6b7280;font-weight:400;letter-spacing:0.3px;">0</div>
<div class="t" style="left:1045px;top:853.30px;font-size:15px;line-height:15px;color:#000;font-weight:400;letter-spacing:0.25px;-webkit-text-stroke:0.28px #000;"><svg class="rup" viewBox="0 0 7 11" width="7" height="11"><path d="M0 0.8H7M0 3.1H7M0.4 0.8H2.6C5 0.8 5 5.2 2.6 5.2H0.5L5.9 10.8" fill="none" stroke="currentColor" stroke-width="1.35"/></svg>0</div>
<div class="t" style="left:1044px;top:876.30px;font-size:15px;line-height:15px;color:#6b7280;font-weight:400;letter-spacing:0.3px;">0</div>
<div class="t" style="left:1230px;top:853.30px;font-size:15px;line-height:15px;color:#000;font-weight:400;letter-spacing:0.25px;-webkit-text-stroke:0.28px #000;"><svg class="rup" viewBox="0 0 7 11" width="7" height="11"><path d="M0 0.8H7M0 3.1H7M0.4 0.8H2.6C5 0.8 5 5.2 2.6 5.2H0.5L5.9 10.8" fill="none" stroke="currentColor" stroke-width="1.35"/></svg>806</div>
<div class="t" style="left:1229px;top:876.30px;font-size:15px;line-height:15px;color:#6b7280;font-weight:400;letter-spacing:0.3px;">1</div>
<div class="t" style="left:1391px;top:853.30px;font-size:15px;line-height:15px;color:#000;font-weight:400;letter-spacing:0.25px;-webkit-text-stroke:0.28px #000;"><svg class="rup" viewBox="0 0 7 11" width="7" height="11"><path d="M0 0.8H7M0 3.1H7M0.4 0.8H2.6C5 0.8 5 5.2 2.6 5.2H0.5L5.9 10.8" fill="none" stroke="currentColor" stroke-width="1.35"/></svg>0</div>
<div class="t" style="left:1390px;top:876.30px;font-size:15px;line-height:15px;color:#6b7280;font-weight:400;letter-spacing:0.3px;">0</div>
<div class="t" style="left:1598px;top:853.30px;font-size:15px;line-height:15px;color:#000;font-weight:400;letter-spacing:0.25px;-webkit-text-stroke:0.28px #000;"><svg class="rup" viewBox="0 0 7 11" width="7" height="11"><path d="M0 0.8H7M0 3.1H7M0.4 0.8H2.6C5 0.8 5 5.2 2.6 5.2H0.5L5.9 10.8" fill="none" stroke="currentColor" stroke-width="1.35"/></svg>0</div>
<div class="t" style="left:1597px;top:876.30px;font-size:15px;line-height:15px;color:#6b7280;font-weight:400;letter-spacing:0.3px;">0</div>
<div class="t" style="left:1737px;top:853.30px;font-size:15px;line-height:15px;color:#000;font-weight:400;letter-spacing:0.25px;-webkit-text-stroke:0.28px #000;"><svg class="rup" viewBox="0 0 7 11" width="7" height="11"><path d="M0 0.8H7M0 3.1H7M0.4 0.8H2.6C5 0.8 5 5.2 2.6 5.2H0.5L5.9 10.8" fill="none" stroke="currentColor" stroke-width="1.35"/></svg>806</div>
<div class="t" style="left:1736px;top:876.30px;font-size:15px;line-height:15px;color:#6b7280;font-weight:400;letter-spacing:0.3px;">1</div>
<div class="box" style="left:305px;top:485px;width:1566px;height:1px;background:#dedede"></div>
<div class="box" style="left:1901px;top:0;width:19px;height:902px;background:#fafafa"></div>
<svg class="ic" style="left:1901px;top:0" width="19" height="18" viewBox="0 0 19 18"><path d="M4.4 13.5L9.5 5.5L14.6 13.5Z" fill="#8a8a8a" stroke="#8a8a8a" stroke-width="1.2" stroke-linejoin="round"/></svg>
<div class="box" style="left:1905px;top:22px;width:11px;height:833px;border-radius:6px;background:#8a8a8a"></div>
<svg class="ic" style="left:1901px;top:891px" width="19" height="12" viewBox="0 0 19 12"><path d="M4.4 6.5L9.5 14.5L14.6 6.5Z" fill="#8a8a8a" stroke="#8a8a8a" stroke-width="1.2" stroke-linejoin="round"/></svg>
<div class="box" style="left:1800px;top:855px;width:130px;height:40px;border-radius:8px;background:#f9f9f9;border:1px solid #e3e3e3;box-sizing:border-box;box-shadow:0 4px 10px rgba(0,0,0,0.14)"></div>
<div class="t" style="left:1812px;top:868.15px;font-size:14px;line-height:14px;color:#262626;font-weight:400;letter-spacing:0.6px;">Show desktop</div>
</body></html>
